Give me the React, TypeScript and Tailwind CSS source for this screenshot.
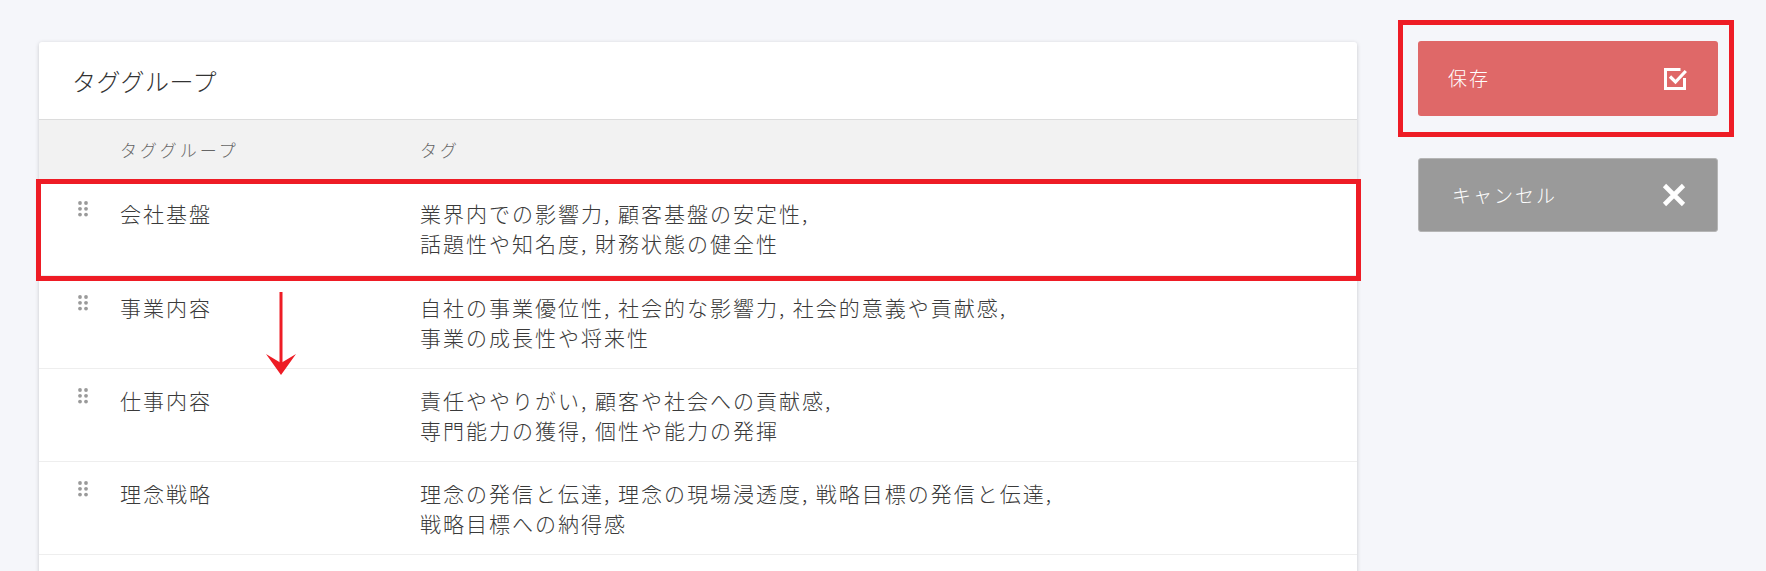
import React from "react";

const font = { fontFamily: '"Noto Sans CJK JP", "Noto Sans", sans-serif' };

const groups = [
  {
    name: "会社基盤",
    tags: ["業界内での影響力, 顧客基盤の安定性,", "話題性や知名度, 財務状態の健全性"],
  },
  {
    name: "事業内容",
    tags: [
      "自社の事業優位性, 社会的な影響力, 社会的意義や貢献感,",
      "事業の成長性や将来性",
    ],
  },
  {
    name: "仕事内容",
    tags: ["責任ややりがい, 顧客や社会への貢献感,", "専門能力の獲得, 個性や能力の発揮"],
  },
  {
    name: "理念戦略",
    tags: [
      "理念の発信と伝達, 理念の現場浸透度, 戦略目標の発信と伝達,",
      "戦略目標への納得感",
    ],
  },
];

const Grip = () => (
  <svg width="11" height="16" viewBox="0 0 11 16" className="text-[#9a9a9a]">
    {[2, 7.8, 13.6].map((cy) =>
      [2, 8].map((cx) => (
        <circle key={`${cx}-${cy}`} cx={cx} cy={cy} r="1.9" fill="currentColor" />
      ))
    )}
  </svg>
);

const CheckIcon = () => (
  <svg width="23" height="22" viewBox="0 0 23 22" fill="none" stroke="white">
    <path d="M16.5 1.5H1.5V20.5H20.5V10" strokeWidth="3" />
    <path d="M6 8.5L11.5 14L21.8 3" strokeWidth="3.2" />
  </svg>
);

const CloseIcon = () => (
  <svg width="24" height="24" viewBox="0 0 24 24" stroke="white">
    <path d="M2.5 2.5L21.5 21.5M21.5 2.5L2.5 21.5" strokeWidth="4.6" />
  </svg>
);

const DownArrow = () => (
  <svg
    width="32"
    height="83"
    viewBox="0 0 32 83"
    className="pointer-events-none absolute left-[226px] top-[250px]"
  >
    <rect x="14.5" y="0" width="3" height="74" fill="#ee1c25" />
    <polygon points="16,83 1,62 16,71 31,62" fill="#ee1c25" />
  </svg>
);

export default function App() {
  return (
    <div
      style={font}
      className="flex min-h-[571px] gap-[61px] overflow-hidden bg-[#f5f6fa] pl-[39px] pt-[41px]"
    >
      <section className="relative mt-px w-[1318px] self-start rounded-[3px] bg-white pb-[40px] shadow-[0_1px_4px_rgba(0,0,0,0.18)]">
        <div className="flex h-[78px] items-center border-b border-[#dcdcdc] pl-[33px]">
          <h2 className="text-[24px] font-light tracking-[0.5px] text-[#333]">
            タググループ
          </h2>
        </div>

        <div className="flex h-[60px] items-center bg-[#f2f2f2] pl-[81px] text-[17px] font-light tracking-[3px] text-[#666]">
          <div className="w-[300px]">タググループ</div>
          <div>タグ</div>
        </div>

        {groups.map((g, i) => (
          <div
            key={g.name}
            className={
              i === 0
                ? "relative flex h-[96px] border-b border-[#eeeeee] pl-[39px] pt-[18px] text-[21px] font-light leading-[30px] tracking-[2px] text-[#3a3a3a]"
                : "relative flex h-[93px] border-b border-[#eeeeee] pl-[39px] pt-[16px] text-[21px] font-light leading-[30px] tracking-[2px] text-[#3a3a3a]"
            }
          >
            <div className="w-[42px] pt-[3px]">
              <Grip />
            </div>
            <div className="w-[300px]">{g.name}</div>
            <div className="whitespace-nowrap">
              {g.tags.map((line) => (
                <div key={line}>{line}</div>
              ))}
            </div>
            {i === 0 && (
              <div className="pointer-events-none absolute -bottom-[6px] -left-[3px] -right-[4px] -top-[1px] border-[5px] border-[#ee1c25]" />
            )}
          </div>
        ))}

        <DownArrow />
      </section>

      <aside className="flex w-[300px] flex-col gap-[42px]">
        <div className="relative">
          <button
            type="button"
            className="flex h-[75px] w-full items-center justify-between rounded-[3px] bg-[#df6868] pl-[30px] pr-[31px] text-[19px] font-light tracking-[2px] text-white"
          >
            <span>保存</span>
            <CheckIcon />
          </button>
          <div className="pointer-events-none absolute -bottom-[21px] -left-[20px] -right-[16px] -top-[21px] border-[5px] border-[#ee1c25]" />
        </div>

        <button
          type="button"
          className="flex h-[74px] w-full items-center justify-between rounded-[3px] border border-[#b5b5b5] bg-[#9a9a9a] pl-[33px] pr-[31px] text-[19px] font-light tracking-[2px] text-white"
        >
          <span>キャンセル</span>
          <CloseIcon />
        </button>
      </aside>
    </div>
  );
}
